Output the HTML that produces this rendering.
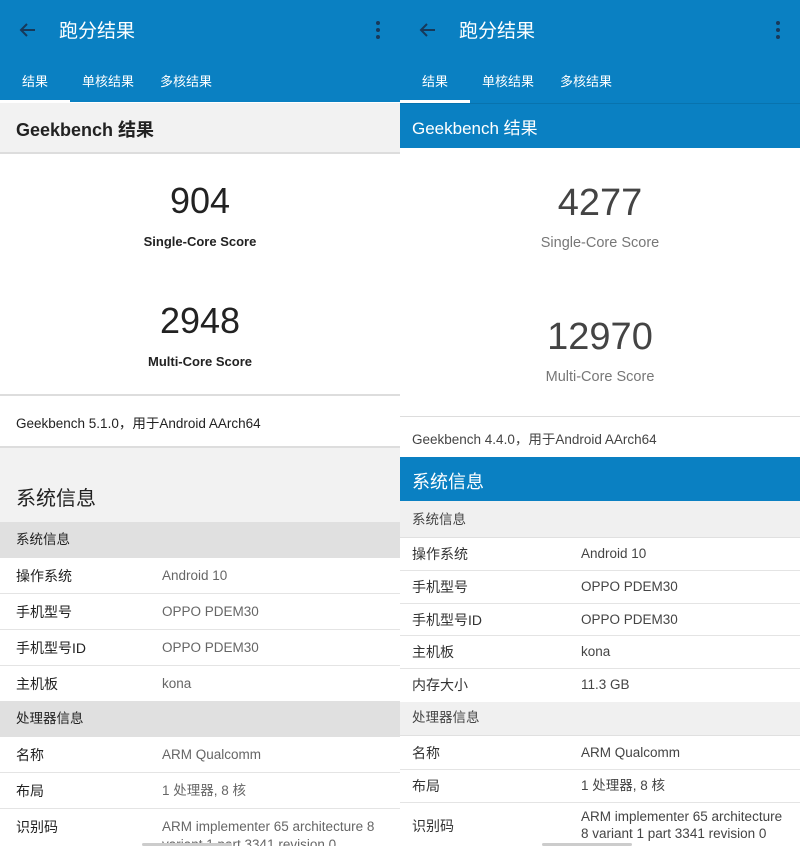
<!DOCTYPE html>
<html><head><meta charset="utf-8"><style>
*{margin:0;padding:0;box-sizing:border-box}
body{width:800px;height:846px;overflow:hidden;background:#fff;font-family:"Liberation Sans","Noto Sans CJK SC",sans-serif;position:relative}
.a{position:absolute;white-space:nowrap}
.p{position:absolute;top:0;width:400px;height:846px;overflow:hidden}
.bar{position:absolute;left:0;width:400px;background:#0a80c2}
.t{color:#fff;font-size:19px;left:59px;top:16px}
.tab{color:#fff;font-size:13px;top:71px}
.row{position:absolute;left:0;width:400px;border-bottom:1px solid #e4e4e4;display:flex;align-items:center}
.k{position:absolute;left:16px;font-size:14px;color:#222;line-height:18px}
.v{position:absolute;font-size:13.5px;color:#666;line-height:18px}
</style></head><body>
<!-- LEFT -->
<div class="p" style="left:0">
<div class="bar" style="top:0;height:102px"></div>
<svg class="a" style="left:18px;top:20px" width="20" height="20" viewBox="0 0 20 20"><path d="M17 10H3M9 4L3 10l6 6" stroke="#17395a" stroke-width="2" fill="none"/></svg>
<div class="a t">跑分结果</div>
<div class="a" style="left:376px;top:21px;width:4px;height:18px"><i style="position:absolute;left:0;top:0;width:4px;height:4px;border-radius:2px;background:#17395a"></i><i style="position:absolute;left:0;top:7px;width:4px;height:4px;border-radius:2px;background:#17395a"></i><i style="position:absolute;left:0;top:14px;width:4px;height:4px;border-radius:2px;background:#17395a"></i></div>
<div class="a tab" style="left:22px">结果</div>
<div class="a tab" style="left:82px">单核结果</div>
<div class="a tab" style="left:160px">多核结果</div>
<div class="a" style="left:0;top:100px;width:70px;height:3px;background:#fff"></div>
<div class="a" style="left:0;top:103px;width:400px;height:51px;background:#f2f2f2;border-bottom:2px solid #ddd"></div>
<div class="a" style="left:16px;top:116px;font-size:18px;font-weight:bold;color:#222">Geekbench 结果</div>
<div class="a" style="left:0;width:400px;text-align:center;top:180px;font-size:36px;color:#222">904</div>
<div class="a" style="left:0;width:400px;text-align:center;top:234px;font-size:13px;font-weight:bold;color:#222">Single-Core Score</div>
<div class="a" style="left:0;width:400px;text-align:center;top:300px;font-size:36px;color:#222">2948</div>
<div class="a" style="left:0;width:400px;text-align:center;top:354px;font-size:13px;font-weight:bold;color:#222">Multi-Core Score</div>
<div class="a" style="left:0;top:394px;width:400px;height:2px;background:#ddd"></div>
<div class="a" style="left:16px;top:412px;font-size:13.5px;color:#222">Geekbench 5.1.0，用于Android AArch64</div>
<div class="a" style="left:0;top:446px;width:400px;height:76px;background:#f2f2f2;border-top:2px solid #ddd"></div>
<div class="a" style="left:16px;top:482px;font-size:20px;color:#222">系统信息</div>
<div class="a" style="left:0;top:522px;width:400px;height:36px;background:#e0e0e0"></div>
<div class="a k" style="top:531px;font-size:13.5px">系统信息</div>
<div class="row" style="top:558px;height:36px"><span class="k" style="top:9px">操作系统</span><span class="v" style="left:162px;top:9px">Android 10</span></div>
<div class="row" style="top:594px;height:36px"><span class="k" style="top:9px">手机型号</span><span class="v" style="left:162px;top:9px">OPPO PDEM30</span></div>
<div class="row" style="top:630px;height:36px"><span class="k" style="top:9px">手机型号ID</span><span class="v" style="left:162px;top:9px">OPPO PDEM30</span></div>
<div class="row" style="top:666px;height:35px;border:none"><span class="k" style="top:9px">主机板</span><span class="v" style="left:162px;top:9px">kona</span></div>
<div class="a" style="left:0;top:701px;width:400px;height:36px;background:#e0e0e0"></div>
<div class="a k" style="top:710px;font-size:13.5px">处理器信息</div>
<div class="row" style="top:737px;height:36px"><span class="k" style="top:9px">名称</span><span class="v" style="left:162px;top:9px">ARM Qualcomm</span></div>
<div class="row" style="top:773px;height:36px"><span class="k" style="top:9px">布局</span><span class="v" style="left:162px;top:9px">1 处理器, 8 核</span></div>
<div class="row" style="top:809px;height:40px;border:none"><span class="k" style="top:9px">识别码</span><span class="v" style="left:162px;top:9px">ARM implementer 65 architecture 8<br>variant 1 part 3341 revision 0</span></div>
</div>
<!-- RIGHT -->
<div class="p" style="left:400px">
<div class="bar" style="top:0;height:148px"></div>
<svg class="a" style="left:18px;top:20px" width="20" height="20" viewBox="0 0 20 20"><path d="M17 10H3M9 4L3 10l6 6" stroke="#17395a" stroke-width="2" fill="none"/></svg>
<div class="a t">跑分结果</div>
<div class="a" style="left:376px;top:21px;width:4px;height:18px"><i style="position:absolute;left:0;top:0;width:4px;height:4px;border-radius:2px;background:#17395a"></i><i style="position:absolute;left:0;top:7px;width:4px;height:4px;border-radius:2px;background:#17395a"></i><i style="position:absolute;left:0;top:14px;width:4px;height:4px;border-radius:2px;background:#17395a"></i></div>
<div class="a tab" style="left:22px">结果</div>
<div class="a tab" style="left:82px">单核结果</div>
<div class="a tab" style="left:160px">多核结果</div>
<div class="a" style="left:0;top:100px;width:70px;height:3px;background:#fff"></div>
<div class="a" style="left:0;top:103px;width:400px;height:1px;background:#0873ae"></div>
<div class="a" style="left:12px;top:114px;font-size:17px;color:#fff">Geekbench 结果</div>
<div class="a" style="left:0;width:400px;text-align:center;top:182px;font-size:38px;color:#444">4277</div>
<div class="a" style="left:0;width:400px;text-align:center;top:235px;font-size:14.5px;color:#777">Single-Core Score</div>
<div class="a" style="left:0;width:400px;text-align:center;top:316px;font-size:38px;color:#444">12970</div>
<div class="a" style="left:0;width:400px;text-align:center;top:369px;font-size:14.5px;color:#777">Multi-Core Score</div>
<div class="a" style="left:0;top:416px;width:400px;height:1px;background:#ddd"></div>
<div class="a" style="left:12px;top:428px;font-size:13.5px;color:#444">Geekbench 4.4.0，用于Android AArch64</div>
<div class="a" style="left:0;top:457px;width:400px;height:44px;background:#0a80c2"></div>
<div class="a" style="left:12px;top:468px;font-size:18px;color:#fff">系统信息</div>
<div class="a" style="left:0;top:501px;width:400px;height:37px;background:#f0f0f0;border-bottom:1px solid #e0e0e0"></div>
<div class="a k" style="left:12px;top:511px;font-size:13.5px;color:#444">系统信息</div>
<div class="row" style="top:538px;height:33px"><span class="k" style="left:12px;top:7px;color:#333">操作系统</span><span class="v" style="left:181px;top:7px;color:#444">Android 10</span></div>
<div class="row" style="top:571px;height:33px"><span class="k" style="left:12px;top:7px;color:#333">手机型号</span><span class="v" style="left:181px;top:7px;color:#444">OPPO PDEM30</span></div>
<div class="row" style="top:604px;height:32px"><span class="k" style="left:12px;top:7px;color:#333">手机型号ID</span><span class="v" style="left:181px;top:7px;color:#444">OPPO PDEM30</span></div>
<div class="row" style="top:636px;height:33px"><span class="k" style="left:12px;top:7px;color:#333">主机板</span><span class="v" style="left:181px;top:7px;color:#444">kona</span></div>
<div class="row" style="top:669px;height:33px;border:none"><span class="k" style="left:12px;top:7px;color:#333">内存大小</span><span class="v" style="left:181px;top:7px;color:#444">11.3 GB</span></div>
<div class="a" style="left:0;top:702px;width:400px;height:34px;background:#f0f0f0;border-bottom:1px solid #e0e0e0"></div>
<div class="a k" style="left:12px;top:709px;font-size:13.5px;color:#444">处理器信息</div>
<div class="row" style="top:736px;height:34px"><span class="k" style="left:12px;top:8px;color:#333">名称</span><span class="v" style="left:181px;top:8px;color:#444">ARM Qualcomm</span></div>
<div class="row" style="top:770px;height:33px"><span class="k" style="left:12px;top:7px;color:#333">布局</span><span class="v" style="left:181px;top:7px;color:#444">1 处理器, 8 核</span></div>
<div class="row" style="top:803px;height:43px;border:none"><span class="k" style="left:12px;top:14px;color:#333">识别码</span><span class="v" style="left:181px;top:5px;line-height:17px;color:#444">ARM implementer 65 architecture<br>8 variant 1 part 3341 revision 0</span></div>
</div>
<div class="a" style="left:142px;top:843px;width:90px;height:3px;background:#ccc;border-radius:2px"></div>
<div class="a" style="left:542px;top:843px;width:90px;height:3px;background:#ccc;border-radius:2px"></div>
</body></html>
